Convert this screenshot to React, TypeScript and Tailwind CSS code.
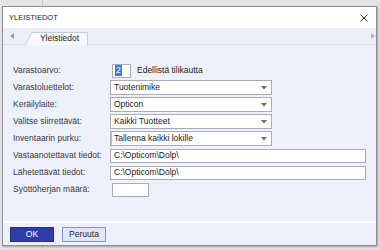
import React from "react";

function Arrow() {
  return (
    <svg width="6" height="4" viewBox="0 0 6 4" className="shrink-0">
      <path d="M0 0 L6 0 L3 3.5 Z" fill="#6a6a70" />
    </svg>
  );
}

function Select({ value, focus }: { value: string; focus?: boolean }) {
  return (
    <div className="w-[162px] h-[15px] bg-white border border-[#a9abb8] flex items-center justify-between pl-[3px] pr-[4px] relative">
      {focus && <div className="absolute left-0 top-0 bottom-0 w-[1px] bg-[#e8a6c8]" />}
      <span className="text-[8.5px] text-[#222] leading-none">{value}</span>
      <Arrow />
    </div>
  );
}

function Row({ label, children }: { label: string; children: React.ReactNode }) {
  return (
    <div className="h-[17px] flex items-center">
      <div className="w-[97px] text-[8.5px] text-[#3a3a3a] leading-none">{label}</div>
      {children}
    </div>
  );
}

export default function App() {
  return (
    <div className="w-[380px] h-[250px] bg-[#e4e4e8] flex flex-col overflow-hidden relative font-['Liberation_Sans',Arial,sans-serif]">
      <div className="absolute left-[42px] top-0 bottom-0 w-[1px] bg-[#c9c9ce]" />
      <div className="mt-[6px] ml-[2px] w-[375px] h-[240px] border border-[#8e8e96] shadow-[1px_1px_2px_rgba(0,0,0,0.3)] flex flex-col bg-[#eef0fa] relative z-10">
        <div className="h-[21px] bg-white flex items-center justify-between pl-[6px] pr-[8px]">
          <span className="text-[7.5px] text-[#1e1e1e] leading-none">YLEISTIEDOT</span>
          <svg width="8" height="8" viewBox="0 0 8 8">
            <path d="M0.5 0.5 L7.5 7.5 M7.5 0.5 L0.5 7.5" stroke="#333" strokeWidth="1" />
          </svg>
        </div>
        <div className="h-[17px] bg-[#eceef6] border-b border-[#d9dbe6] flex items-end relative">
          <div className="h-full flex items-center pl-[7px] pr-[2px]">
            <svg width="4" height="6" viewBox="0 0 4 6">
              <path d="M4 0 L4 6 L0 3 Z" fill="#9a9aa4" />
            </svg>
          </div>
          <div className="relative ml-[9px] w-[63px] h-[12px] flex items-center justify-center pl-[6px]">
            <svg className="absolute inset-0" width="63" height="13" viewBox="0 0 63 13">
              <path d="M0 13 L7 0.5 L62.5 0.5 L62.5 13" fill="#f8f9fd" stroke="#c9cbd7" strokeWidth="1" />
            </svg>
            <span className="relative text-[8.5px] text-[#222] leading-none">Yleistiedot</span>
          </div>
          <div className="flex-1" />
          <div className="h-full flex items-center pr-[1px]">
            <svg width="4" height="6" viewBox="0 0 4 6">
              <path d="M0 0 L0 6 L4 3 Z" fill="#b4b4bc" />
            </svg>
          </div>
        </div>
        <div className="flex-1 pt-[17px] pl-[10px] flex flex-col">
          <Row label="Varastoarvo:">
            <div className="ml-[2px] w-[19px] h-[14px] bg-white border border-[#a9abb8] flex items-center pl-[2px]">
              <span className="bg-[#3a7be0] text-white text-[8.5px] leading-none px-[1px] py-[1px]">2</span>
            </div>
            <span className="ml-[6px] text-[8.5px] text-[#222] leading-none">Edellistä tilikautta</span>
          </Row>
          <Row label="Varastoluettelot:">
            <Select value="Tuotenimike" />
          </Row>
          <Row label="Keräilylaite:">
            <Select value="Opticon" />
          </Row>
          <Row label="Valitse siirrettävät:">
            <Select value="Kaikki Tuotteet" />
          </Row>
          <Row label="Inventaarin purku:">
            <Select value="Tallenna kaikki lokille" focus />
          </Row>
          <Row label="Vastaanotettavat tiedot:">
            <div className="w-[256px] h-[14px] bg-white border border-[#a9abb8] flex items-center pl-[3px]">
              <span className="text-[8.5px] text-[#222] leading-none">C:\Opticom\Dolp\</span>
            </div>
          </Row>
          <Row label="Lähetettävät tiedot:">
            <div className="w-[256px] h-[14px] bg-white border border-[#a9abb8] flex items-center pl-[3px]">
              <span className="text-[8.5px] text-[#222] leading-none">C:\Opticom\Dolp\</span>
            </div>
          </Row>
          <Row label="Syöttöherjan määrä:">
            <div className="ml-[2px] w-[37px] h-[14px] bg-white border border-[#a9abb8]" />
          </Row>
        </div>
        <div className="h-[24px] border-t-2 border-white flex items-center gap-[8px] pl-[7px]">
          <div className="w-[44px] h-[15px] bg-[#2f3ca8] border border-[#25308c] flex items-center justify-center">
            <span className="text-[8.5px] text-white leading-none">OK</span>
          </div>
          <div className="w-[44px] h-[15px] bg-[#e3e5f5] border border-[#8b8fcc] flex items-center justify-center">
            <span className="text-[8.5px] text-[#222] leading-none">Peruuta</span>
          </div>
        </div>
      </div>
    </div>
  );
}
